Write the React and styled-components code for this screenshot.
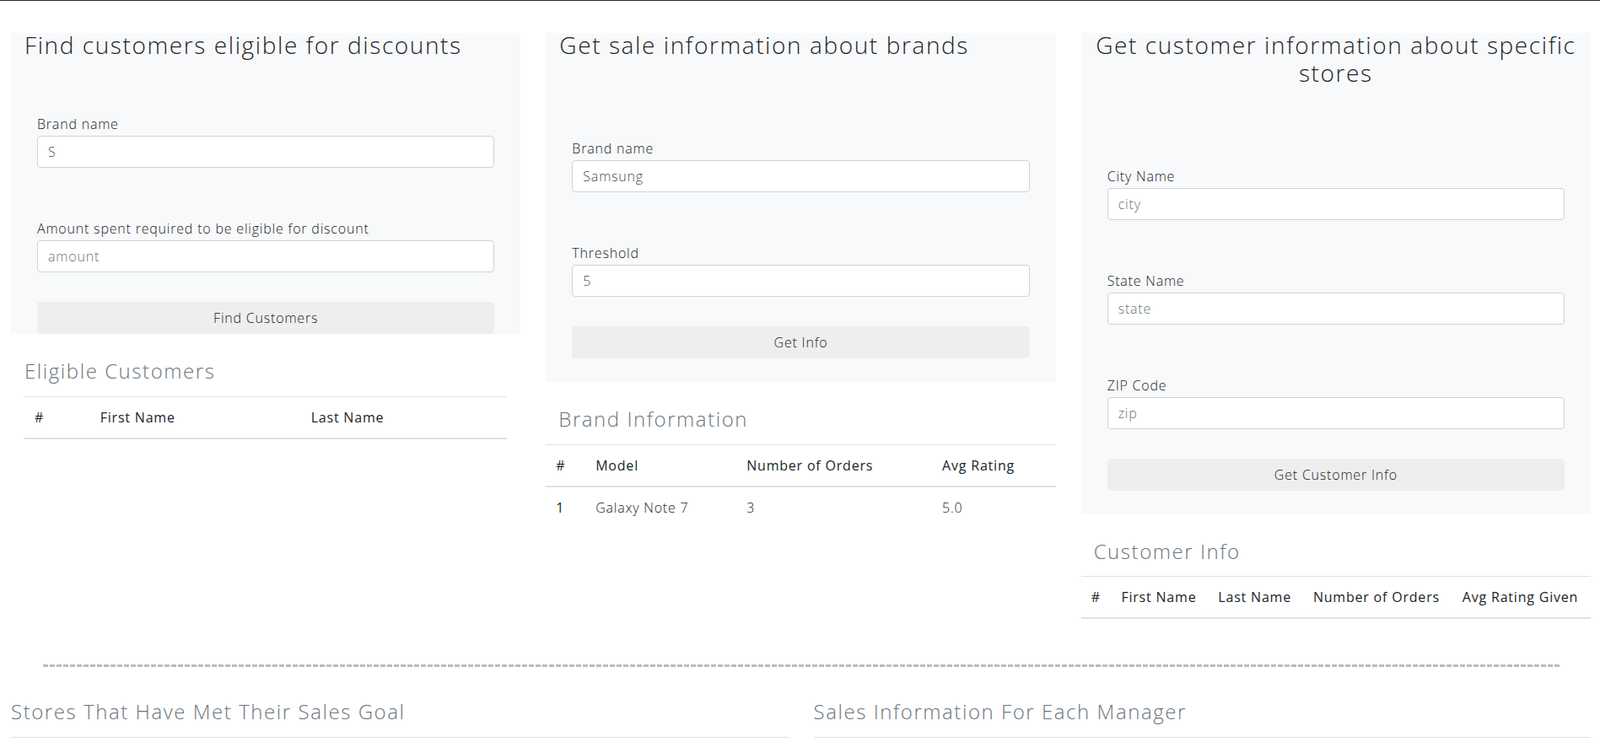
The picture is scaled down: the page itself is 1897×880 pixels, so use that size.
import styled, { createGlobalStyle } from "styled-components";

const GlobalStyle = createGlobalStyle`
  * { box-sizing: border-box; }
  body {
    margin: 0;
    background: #fff;
    color: #212529;
    font-family: "Open Sans", "Liberation Sans", sans-serif;
    font-weight: 300;
    letter-spacing: 0.05em;
  }
`;

const Page = styled.div`
  border-top: 1px solid #212529;
  padding: 38px 11px 0 13px;
`;

const TopRow = styled.div`
  display: flex;
  gap: 30px;
  align-items: flex-start;
`;

const Column = styled.div`
  flex: 1;
  min-width: 0;
`;

const Panel = styled.section`
  display: flow-root;
  background: #f8f9fa;
  padding: 0 16px ${({ $flush }) => ($flush ? "0" : "28px")};
`;

const PanelTitle = styled.h3`
  margin: -2px 0 2px;
  font-size: 28px;
  line-height: 1.17;
  font-weight: 300;
  letter-spacing: 0.057em;
  text-align: ${({ $center }) => ($center ? "center" : "left")};
`;

const Form = styled.form`
  display: flex;
  flex-direction: column;
  padding: ${({ $top }) => $top}px 15px 0;
`;

const Field = styled.div`
  & + & {
    margin-top: 60px;
  }
`;

const Label = styled.label`
  display: block;
  margin-bottom: 2px;
  font-size: 16px;
  line-height: 24px;
`;

const Input = styled.input`
  display: block;
  width: 100%;
  height: 38px;
  padding: 6px 12px;
  font: inherit;
  font-size: 16px;
  letter-spacing: inherit;
  color: #495057;
  background: #fff;
  border: 1px solid #ced4da;
  border-radius: 4px;

  &::placeholder {
    color: #6c757d;
  }
`;

const Button = styled.button`
  display: block;
  width: 100%;
  height: 38px;
  margin-top: 35px;
  border: 0;
  border-radius: 4px;
  background: #eeeeee;
  color: #212529;
  font: inherit;
  font-size: 16px;
  letter-spacing: inherit;
`;

const Results = styled.div`
  padding: 0 ${({ $inset }) => ($inset ? "16px" : "0")};
`;

const SectionTitle = styled.h4`
  margin: ${({ $top }) => $top}px 0 15px;
  padding-left: ${({ $indent }) => $indent}px;
  font-size: 24px;
  line-height: 1.2;
  font-weight: 300;
  letter-spacing: 0.065em;
  color: #6c757d;
`;

const Table = styled.table`
  width: 100%;
  border-collapse: collapse;
  font-size: 16px;
  line-height: 24px;
`;

const Th = styled.th`
  padding: 12px;
  text-align: left;
  font-weight: 500;
  white-space: nowrap;
  border-top: 1px solid #dee2e6;
  border-bottom: ${({ $head }) => ($head ? "2px solid #dee2e6" : "0")};
`;

const Td = styled.td`
  padding: 12px;
  border-top: 1px solid #dee2e6;
`;

const Divider = styled.hr`
  height: 3px;
  margin: 54px 37px 39px 38px;
  border: 0;
  background: repeating-linear-gradient(
    to right,
    #bbb 0 6px,
    transparent 6px 8px
  );
`;

const BottomRow = styled.div`
  display: flex;
  gap: 30px;
`;

const TableTop = styled.div`
  border-top: 1px solid #dee2e6;
  height: 40px;
`;

const FormField = ({ label, placeholder, value }) => (
  <Field>
    <Label>{label}</Label>
    <Input placeholder={placeholder} defaultValue={value} />
  </Field>
);

const DataTable = ({ columns, rows = [] }) => (
  <Table>
    <thead>
      <tr>
        {columns.map((c) => (
          <Th key={c} $head>
            {c}
          </Th>
        ))}
      </tr>
    </thead>
    <tbody>
      {rows.map((r, i) => (
        <tr key={i}>
          <Th>{i + 1}</Th>
          {r.map((v, j) => (
            <Td key={j}>{v}</Td>
          ))}
        </tr>
      ))}
    </tbody>
  </Table>
);

export default function App() {
  return (
    <>
      <GlobalStyle />
      <Page>
        <TopRow>
          <Column>
            <Panel $flush>
              <PanelTitle>Find customers eligible for discounts</PanelTitle>
              <Form $top={63} onSubmit={(e) => e.preventDefault()}>
                <FormField label="Brand name" placeholder="brand" value="S" />
                <FormField
                  label="Amount spent required to be eligible for discount"
                  placeholder="amount"
                />
                <Button type="button">Find Customers</Button>
              </Form>
            </Panel>
            <Results $inset>
              <SectionTitle $top={30} $indent={0}>
                Eligible Customers
              </SectionTitle>
              <DataTable columns={["#", "First Name", "Last Name"]} />
            </Results>
          </Column>

          <Column>
            <Panel>
              <PanelTitle>Get sale information about brands</PanelTitle>
              <Form $top={92} onSubmit={(e) => e.preventDefault()}>
                <FormField label="Brand name" placeholder="brand" value="Samsung" />
                <FormField label="Threshold" placeholder="threshold" value="5" />
                <Button type="button">Get Info</Button>
              </Form>
            </Panel>
            <Results>
              <SectionTitle $top={30} $indent={15}>
                Brand Information
              </SectionTitle>
              <DataTable
                columns={["#", "Model", "Number of Orders", "Avg Rating"]}
                rows={[["Galaxy Note 7", "3", "5.0"]]}
              />
            </Results>
          </Column>

          <Column>
            <Panel>
              <PanelTitle $center>
                Get customer information about specific stores
              </PanelTitle>
              <Form $top={92} onSubmit={(e) => e.preventDefault()}>
                <FormField label="City Name" placeholder="city" />
                <FormField label="State Name" placeholder="state" />
                <FormField label="ZIP Code" placeholder="zip" />
                <Button type="button">Get Customer Info</Button>
              </Form>
            </Panel>
            <Results>
              <SectionTitle $top={30} $indent={15}>
                Customer Info
              </SectionTitle>
              <DataTable
                columns={[
                  "#",
                  "First Name",
                  "Last Name",
                  "Number of Orders",
                  "Avg Rating Given",
                ]}
              />
            </Results>
          </Column>
        </TopRow>

        <Divider />

        <BottomRow>
          <Column>
            <SectionTitle $top={0} $indent={0}>
              Stores That Have Met Their Sales Goal
            </SectionTitle>
            <TableTop />
          </Column>
          <Column>
            <SectionTitle $top={0} $indent={0}>
              Sales Information For Each Manager
            </SectionTitle>
            <TableTop />
          </Column>
        </BottomRow>
      </Page>
    </>
  );
}
